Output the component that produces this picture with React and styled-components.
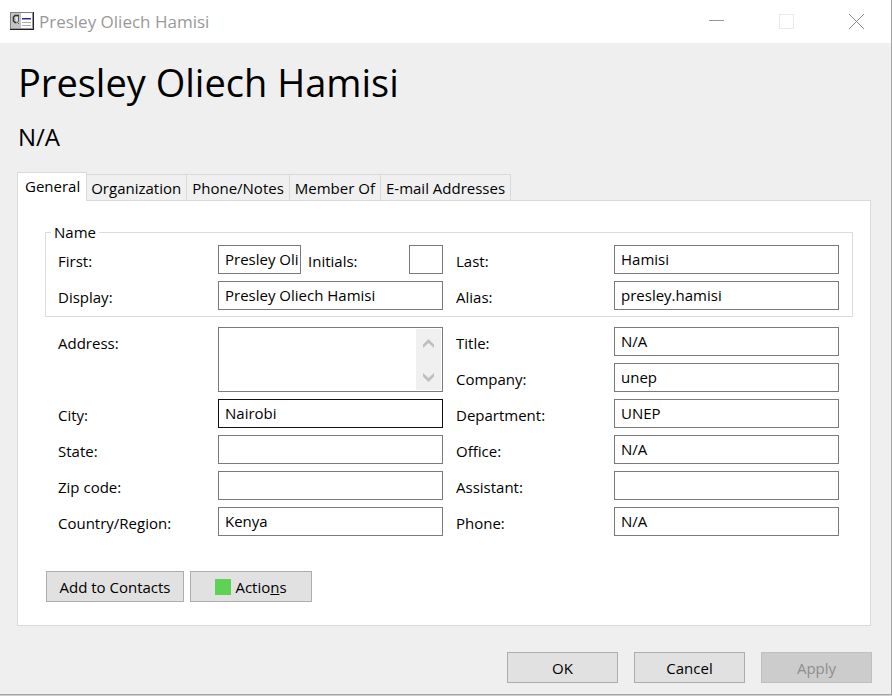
import React, {useState} from 'react';
import styled, {createGlobalStyle} from 'styled-components';

const GlobalStyle = createGlobalStyle`
  * {
    box-sizing: border-box;
  }

  body {
    margin: 0;
    background: #d0d0d0;
  }

  body, button, input, textarea {
    font-family: "Open Sans", "Noto Sans", sans-serif;
    font-size: 15px;
    line-height: 20px;
    color: #000;
  }
`

const Window = styled.div`
  background: #efefef;
  border-right: 1px solid #a3a3a3;
  border-bottom: 1px solid #a3a3a3;
`

const TitleBar = styled.header`
  display: flex;
  align-items: center;
  height: 43px;
  padding-left: 10px;
  background: #fff;
`

const TitleText = styled.span`
  flex: auto;
  padding-left: 5px;
  font-size: 17px;
  color: #999;
`

const WindowButton = styled.button`
  display: flex;
  align-items: center;
  justify-content: center;
  width: 70px;
  height: 41px;
  padding: 0;
  border: none;
  background: transparent;
`

const Heading = styled.h1`
  margin: 0;
  padding: 12px 18px 0;
  font-size: 38px;
  font-weight: 400;
  line-height: 54px;
`

const Subheading = styled.p`
  margin: 0;
  padding: 12px 18px 0;
  font-size: 24px;
  line-height: 32px;
`

const Content = styled.main`
  padding: 19px 20px 0 17px;
`

const TabList = styled.div`
  display: flex;
  align-items: flex-end;
`

const Tab = styled.button`
  height: ${props => props.$active ? '29px' : '26px'};
  padding: ${props => props.$active ? '0 6px 2px 7px' : '0 5px 0 4px'};
  margin-bottom: ${props => props.$active ? '-1px' : '0'};
  border: 1px solid #d9d9d9;
  border-left-width: ${props => props.$active ? '1px' : '0'};
  border-bottom: none;
  background: ${props => props.$active ? '#fff' : '#f0f0f0'};
  white-space: nowrap;

  & + & + & {
    padding-left: 5px;
  }
`

const Panel = styled.section`
  padding: 21px 17px 23px 27px;
  border: 1px solid #d9d9d9;
  background: #fff;
`

const NameGroup = styled.fieldset`
  min-width: 0;
  margin: 0;
  padding: 3px 13px 6px 12px;
  border: 1px solid #dcdcdc;
`

const Legend = styled.legend`
  margin-left: -7px;
  padding: 0 3px;
`

const FieldGrid = styled.div`
  display: grid;
  grid-template-columns: 160px minmax(0, 1fr) 171px minmax(0, 1fr);
  grid-auto-rows: 29px;
  row-gap: 7px;
`

const Details = styled(FieldGrid)`
  padding: 10px 14px 0 13px;
`

const Label = styled.label`
  padding-top: 6px;
  padding-left: ${props => props.$second ? '13px' : '0'};
  grid-row: ${props => props.$tall ? 'span 2' : 'auto'};
`

const TextInput = styled.input`
  width: ${props => props.$width || '100%'};
  height: 29px;
  padding: 0 2px 2px 6px;
  border: 1px solid ${props => props.$dark ? '#111' : '#7a7a7a'};
  border-radius: 0;
  background: #fff;
  outline: none;
`

const SplitCell = styled.div`
  display: flex;
`

const InitialsLabel = styled.label`
  flex: auto;
  padding: 6px 0 0 7px;
`

const AddressBox = styled.div`
  display: flex;
  grid-row: span 2;
  padding: 1px;
  border: 1px solid #7a7a7a;
`

const AddressInput = styled.textarea`
  flex: auto;
  min-width: 0;
  padding: 2px 5px;
  border: none;
  outline: none;
  resize: none;
  overflow: hidden;
`

const ScrollTrack = styled.div`
  display: flex;
  flex-direction: column;
  justify-content: space-between;
  width: 25px;
  padding-top: 1px;
  background: #f0f0f0;
`

const ScrollButton = styled.button`
  display: flex;
  align-items: center;
  justify-content: center;
  height: 27px;
  padding: 0;
  border: none;
  background: transparent;
`

const ButtonRow = styled.div`
  display: flex;
  gap: 6px;
  padding: 35px 0 0 1px;
`

const Button = styled.button`
  display: flex;
  align-items: center;
  justify-content: center;
  width: ${props => props.$width || '111px'};
  height: 31px;
  padding: 0;
  border: 1px solid #adadad;
  background: #e1e1e1;

  &:disabled {
    border-color: #bfbfbf;
    background: #ccc;
    color: #8e8e8e;
  }
`

const GreenSquare = styled.span`
  width: 16px;
  height: 16px;
  margin-right: 4px;
  background: #5dd255;
`

const Footer = styled.footer`
  display: flex;
  justify-content: flex-end;
  gap: 16px;
  padding: 26px 19px 11px;
`

const tabs = ['General', 'Organization', 'Phone/Notes', 'Member Of', 'E-mail Addresses']

function CardIcon() {
    return (
        <svg width="24" height="20" viewBox="0 0 24 20" aria-hidden="true">
            <rect width="24" height="18" fill="#808080"/>
            <rect x="1" y="1" width="21" height="15" fill="#fff"/>
            <rect x="1" y="1" width="10" height="15" fill="#c4c4c4"/>
            <rect x="22" y="1" width="1" height="16" fill="#999"/>
            <rect x="1" y="16" width="22" height="1" fill="#999"/>
            <rect x="23" y="0" width="1" height="18" fill="#222"/>
            <rect x="0" y="17" width="24" height="1" fill="#222"/>
            <path d="M9 3.500H5L3.500 5v4L5 10.500h1.500" stroke="#333" strokeWidth="1.500" fill="none"/>
            <path d="M5.500 5H8v4L6.500 10z" fill="#e4e4e4"/>
            <path d="M8.500 4v5L7.500 10.500l1.500 1.500" stroke="#555" fill="none"/>
            <rect x="12" y="6" width="9" height="1" fill="#27278c"/>
            <rect x="12" y="7" width="9" height="1" fill="#9c9cce"/>
            <rect x="12" y="10" width="9" height="1" fill="#aaa"/>
            <rect x="12" y="13" width="9" height="1" fill="#aaa"/>
        </svg>
    )
}

function Chevron({up}) {
    return (
        <svg width="13" height="10" viewBox="0 0 13 10" aria-hidden="true">
            <path d={up ? 'M1 5.500L6.500 0L12 5.500V9L6.500 4L1 9z' : 'M1 1L6.500 6L12 1V4.500L6.500 10L1 4.500z'} fill="#bfbfbf"/>
        </svg>
    )
}

function Field({id, label, value, second, dark}) {
    return (
        <>
            <Label htmlFor={id} $second={second}>{label}</Label>
            <TextInput id={id} defaultValue={value} $dark={dark}/>
        </>
    )
}

export default function App() {
    const [activeTab, setActiveTab] = useState('General')

    return (
        <>
            <GlobalStyle/>
            <Window>
                <TitleBar>
                    <CardIcon/>
                    <TitleText>Presley Oliech Hamisi</TitleText>
                    <WindowButton aria-label="Minimize">
                        <svg width="15" height="15" aria-hidden="true">
                            <path d="M0 6.500H15" stroke="#999"/>
                        </svg>
                    </WindowButton>
                    <WindowButton aria-label="Maximize">
                        <svg width="15" height="15" aria-hidden="true">
                            <rect x="0.500" y="0.500" width="14" height="14" stroke="#e9e9e9" fill="none"/>
                        </svg>
                    </WindowButton>
                    <WindowButton aria-label="Close">
                        <svg width="15" height="15" aria-hidden="true">
                            <path d="M0 0L15 15M15 0L0 15" stroke="#8c8c8c"/>
                        </svg>
                    </WindowButton>
                </TitleBar>
                <Heading>Presley Oliech Hamisi</Heading>
                <Subheading>N/A</Subheading>
                <Content>
                    <TabList role="tablist">
                        {tabs.map((tab) => (
                            <Tab
                                key={tab}
                                role="tab"
                                aria-selected={tab === activeTab}
                                $active={tab === activeTab}
                                onClick={() => setActiveTab(tab)}
                            >
                                {tab}
                            </Tab>
                        ))}
                    </TabList>
                    <Panel>
                        <NameGroup>
                            <Legend>Name</Legend>
                            <FieldGrid>
                                <Label htmlFor="first">First:</Label>
                                <SplitCell>
                                    <TextInput id="first" defaultValue="Presley Oliech" $width="83px"/>
                                    <InitialsLabel htmlFor="initials">Initials:</InitialsLabel>
                                    <TextInput id="initials" $width="34px"/>
                                </SplitCell>
                                <Field id="last" label="Last:" value="Hamisi" second/>
                                <Field id="display" label="Display:" value="Presley Oliech Hamisi"/>
                                <Field id="alias" label="Alias:" value="presley.hamisi" second/>
                            </FieldGrid>
                        </NameGroup>
                        <Details>
                            <Label htmlFor="address" $tall>Address:</Label>
                            <AddressBox>
                                <AddressInput id="address"/>
                                <ScrollTrack>
                                    <ScrollButton aria-label="Scroll up"><Chevron up/></ScrollButton>
                                    <ScrollButton aria-label="Scroll down"><Chevron/></ScrollButton>
                                </ScrollTrack>
                            </AddressBox>
                            <Field id="title" label="Title:" value="N/A" second/>
                            <Field id="company" label="Company:" value="unep" second/>
                            <Field id="city" label="City:" value="Nairobi" dark/>
                            <Field id="department" label="Department:" value="UNEP" second/>
                            <Field id="state" label="State:"/>
                            <Field id="office" label="Office:" value="N/A" second/>
                            <Field id="zip" label="Zip code:"/>
                            <Field id="assistant" label="Assistant:" second/>
                            <Field id="country" label="Country/Region:" value="Kenya"/>
                            <Field id="phone" label="Phone:" value="N/A" second/>
                        </Details>
                        <ButtonRow>
                            <Button $width="138px">Add to Contacts</Button>
                            <Button $width="122px">
                                <GreenSquare/>
                                <span>Actio<u>n</u>s</span>
                            </Button>
                        </ButtonRow>
                    </Panel>
                </Content>
                <Footer>
                    <Button>OK</Button>
                    <Button>Cancel</Button>
                    <Button disabled>Apply</Button>
                </Footer>
            </Window>
        </>
    )
}
